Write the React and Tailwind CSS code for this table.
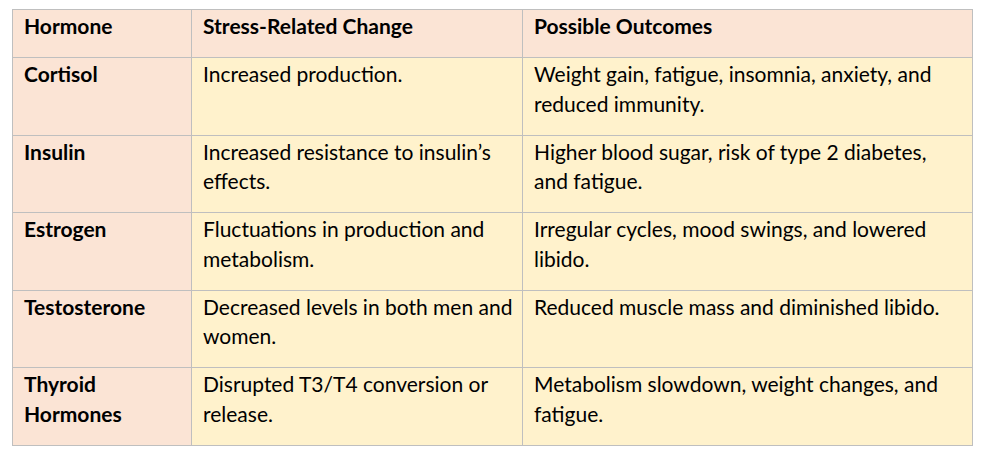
import React from 'react';

const rows = [
  ['Cortisol', 'Increased production.', 'Weight gain, fatigue, insomnia, anxiety, and reduced immunity.'],
  ['Insulin', 'Increased resistance to insulin’s effects.', 'Higher blood sugar, risk of type 2 diabetes, and fatigue.'],
  ['Estrogen', 'Fluctuations in production and metabolism.', 'Irregular cycles, mood swings, and lowered libido.'],
  ['Testosterone', 'Decreased levels in both men and women.', 'Reduced muscle mass and diminished libido.'],
  ['Thyroid Hormones', 'Disrupted T3/T4 conversion or release.', 'Metabolism slowdown, weight changes, and fatigue.'],
];

const cell = 'border border-[#bfbfbf] align-top pl-[11px] pr-[8px] pt-[1px] leading-[29.5px]';

const App = () => {
  return (
    <div className="w-[1000px] h-[467px] bg-white pt-[9px] pl-[12px] text-black text-[21px]" style={{ fontFamily: 'Lato, "Open Sans", sans-serif' }}>
      <table className="table-fixed border-collapse w-[960px]">
        <colgroup>
          <col className="w-[179px]" />
          <col className="w-[331px]" />
          <col className="w-[450px]" />
        </colgroup>
        <thead>
          <tr className="h-[48px] bg-[#fbe4d5]">
            <th className={cell + ' text-left font-bold'}>Hormone</th>
            <th className={cell + ' text-left font-bold'}>Stress-Related Change</th>
            <th className={cell + ' text-left font-bold'}>Possible Outcomes</th>
          </tr>
        </thead>
        <tbody>
          {rows.map((r, i) => (
            <tr key={i} className="h-[77.6px]">
              <td className={cell + ' bg-[#fbe4d5] font-bold'}>{r[0]}</td>
              <td className={cell + ' bg-[#fff2cc]'}>{r[1]}</td>
              <td className={cell + ' bg-[#fff2cc]'}>{r[2]}</td>
            </tr>
          ))}
        </tbody>
      </table>
    </div>
  );
};

export default App;
